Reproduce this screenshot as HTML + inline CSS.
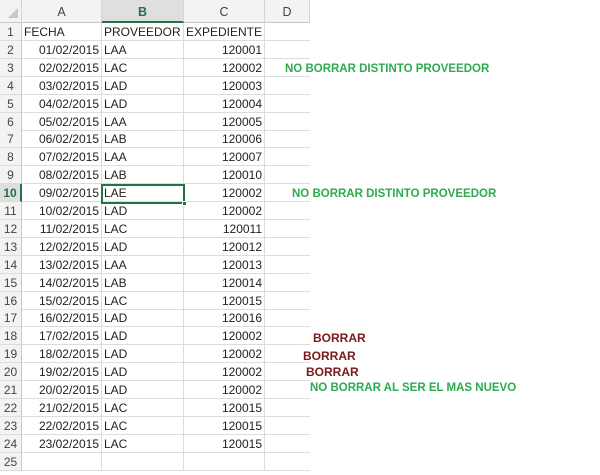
<!DOCTYPE html>
<html><head><meta charset="utf-8"><style>
*{margin:0;padding:0;box-sizing:border-box}
body{width:600px;height:475px;background:#fff;position:relative;overflow:hidden;font-family:"Liberation Sans",sans-serif;font-size:12px;color:#222}
.hd{position:absolute;top:0;height:23px;background:#f3f3f3;border-right:1px solid #d4d4d4;border-bottom:1px solid #c8c8c8;text-align:center;line-height:24px;color:#444;font-size:12.5px}
.rn{position:absolute;left:0;width:22px;height:18px;background:#f3f3f3;border-right:1px solid #c8c8c8;border-bottom:1px solid #dcdcdc;text-align:center;color:#444;line-height:18px}
.c{position:absolute;height:18px;border-right:1px solid #dcdcdc;border-bottom:1px solid #dcdcdc;line-height:18px;padding:0 2px;white-space:nowrap;overflow:hidden}
.r{text-align:right}
.g{position:absolute;color:#2eaa4f;font-weight:bold;font-size:11.5px;white-space:nowrap}
.b{position:absolute;color:#7a1a1a;font-weight:bold;font-size:12px}
</style></head><body>
<div class="hd" style="left:0;width:22px"></div>
<div style="position:absolute;left:8px;top:8px;width:0;height:0;border-left:10px solid transparent;border-bottom:10px solid #c8c8c8"></div>
<div class="hd" style="left:22px;width:80px">A</div>
<div class="hd" style="left:102px;width:82px;background:#dfdfdf;color:#217346;font-weight:bold;border-bottom:2px solid #217346">B</div>
<div class="hd" style="left:184px;width:81px">C</div>
<div class="hd" style="left:265px;width:45px">D</div>
<div id="g"></div>
<script>
var d=[["FECHA","PROVEEDOR","EXPEDIENTE"],
["01/02/2015","LAA","120001"],["02/02/2015","LAC","120002"],["03/02/2015","LAD","120003"],["04/02/2015","LAD","120004"],["05/02/2015","LAA","120005"],["06/02/2015","LAB","120006"],["07/02/2015","LAA","120007"],["08/02/2015","LAB","120010"],["09/02/2015","LAE","120002"],["10/02/2015","LAD","120002"],["11/02/2015","LAC","120011"],["12/02/2015","LAD","120012"],["13/02/2015","LAA","120013"],["14/02/2015","LAB","120014"],["15/02/2015","LAC","120015"],["16/02/2015","LAD","120016"],["17/02/2015","LAD","120002"],["18/02/2015","LAD","120002"],["19/02/2015","LAD","120002"],["20/02/2015","LAD","120002"],["21/02/2015","LAC","120015"],["22/02/2015","LAC","120015"],["23/02/2015","LAC","120015"],["","",""]];
var h="";
for(var i=0;i<d.length;i++){var t=(23+i*17.9).toFixed(1);
var sel=i==9;
h+='<div class="rn" style="top:'+t+'px;'+(sel?'background:#dfdfdf;color:#217346;font-weight:bold;border-right:2px solid #217346':'')+'">'+(i+1)+'</div>';
var a=i==0?'':' r';
h+='<div class="c'+a+'" style="left:22px;width:80px;top:'+t+'px">'+d[i][0]+'</div>';
h+='<div class="c" style="left:102px;width:82px;top:'+t+'px">'+d[i][1]+'</div>';
h+='<div class="c'+a+'" style="left:184px;width:81px;top:'+t+'px">'+d[i][2]+'</div>';
h+='<div class="c" style="left:265px;width:45px;top:'+t+'px;border-right:none"></div>';}
document.getElementById('g').innerHTML=h;
</script>
<div style="position:absolute;left:101px;top:184px;width:84px;height:20px;border:2px solid #217346"></div>
<div style="position:absolute;left:182px;top:201px;width:5px;height:5px;background:#217346;border:1px solid #fff"></div>
<div class="g" style="left:285px;top:63px">NO BORRAR DISTINTO PROVEEDOR</div>
<div class="g" style="left:292px;top:188px">NO BORRAR DISTINTO PROVEEDOR</div>
<div class="b" style="left:313px;top:331px">BORRAR</div>
<div class="b" style="left:303px;top:349px">BORRAR</div>
<div class="b" style="left:306px;top:365px">BORRAR</div>
<div class="g" style="left:310px;top:382px">NO BORRAR AL SER EL MAS NUEVO</div>
</body></html>
